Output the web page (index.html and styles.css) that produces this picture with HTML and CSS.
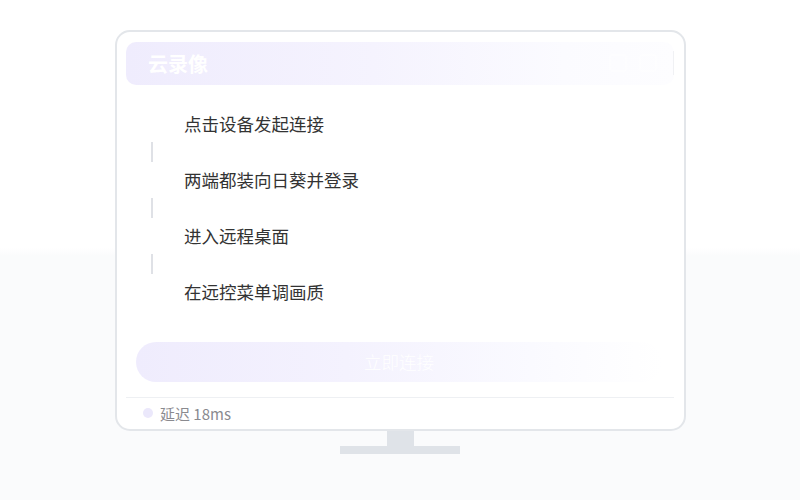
FILE: index.html
```html
<!DOCTYPE html>
<html lang="zh-CN">

<head>
    <meta charset="UTF-8">
    <title>云录像</title>
    <link rel="stylesheet" href="styles.css">
</head>

<body>
    <div class="stage">
        <div class="screen">
            <div class="bar">
                <span class="bar_title">云录像</span>
                <span class="bar_ctrl"></span>
                <span class="bar_ctrl"></span>
                <span class="bar_edge"></span>
            </div>
            <div class="steps">
                <div class="step">点击设备发起连接</div>
                <div class="link"></div>
                <div class="step">两端都装向日葵并登录</div>
                <div class="link"></div>
                <div class="step">进入远程桌面</div>
                <div class="link"></div>
                <div class="step">在远控菜单调画质</div>
            </div>
            <div class="go">立即连接</div>
            <div class="foot">
                <span class="dot"></span>
                <span class="lag">延迟 18ms</span>
            </div>
        </div>
        <div class="neck"></div>
        <div class="base"></div>
    </div>
</body>

</html>
```

FILE: styles.css
```css
html, body {
    margin: 0;
    height: 100%;
}

body {
    width: 800px;
    height: 500px;
    background: linear-gradient(to bottom, #ffffff 0, #ffffff 248px, #fafbfc 256px, #fafbfc 100%);
    font-family: "Noto Sans CJK SC", "Noto Sans", sans-serif;
    overflow: hidden;
}

.stage {
    display: flex;
    flex-direction: column;
    align-items: center;
    padding-top: 30px;
}

.screen {
    width: 548px;
    height: 397px;
    border: 2px solid #e3e6ea;
    border-radius: 15px;
    background: #fff;
    box-sizing: content-box;
    display: flex;
    flex-direction: column;
    padding: 0 10px 0 9px;
    margin-left: 1px;
}

.bar {
    margin-top: 10px;
    height: 45px;
    border-radius: 10px;
    background: linear-gradient(to right, #efecfd 0%, #f5f3fe 45%, #fbfbff 80%, #fdfdff 100%);
    display: flex;
    align-items: center;
    padding-left: 22px;
    gap: 12px;
}

.bar_title {
    color: #fff;
    font-size: 20px;
    font-weight: bold;
    flex: 1;
}

.bar_ctrl {
    width: 14px;
    height: 14px;
    border: 2px solid rgba(255, 255, 255, 0.35);
    border-radius: 3px;
}

.bar_edge {
    width: 1px;
    height: 24px;
    background: #f0f1f4;
    margin-left: 4px;
}

.steps {
    display: flex;
    flex-direction: column;
    padding-top: 27px;
    padding-left: 25px;
}

.step {
    height: 24px;
    line-height: 24px;
    font-size: 17.5px;
    color: #333;
    padding-left: 33px;
}

.link {
    width: 2px;
    height: 20px;
    margin: 6px 0 6px 0;
    background: #dfe1e6;
}

.go {
    margin: 38px 12px 0 10px;
    height: 40px;
    line-height: 40px;
    border-radius: 20px;
    background: linear-gradient(to right, #efecfd 0%, #f4f2fe 40%, #fafaff 75%, #ffffff 100%);
    color: #fff;
    font-size: 17.5px;
    font-weight: 300;
    text-align: center;
}

.foot {
    margin-top: 15px;
    border-top: 1px solid #eef0f3;
    display: flex;
    align-items: center;
    height: 33px;
    padding-left: 17px;
    gap: 7px;
}

.dot {
    width: 10px;
    height: 10px;
    border-radius: 50%;
    background: #ebe8fb;
}

.lag {
    font-size: 15px;
    color: #8a8a8f;
}

.neck {
    width: 27px;
    height: 15px;
    background: #dfe3e8;
}

.base {
    width: 120px;
    height: 8px;
    background: #dfe3e8;
}
```
